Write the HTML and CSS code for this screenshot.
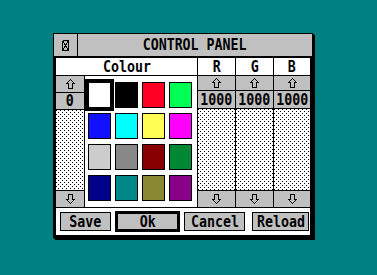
FILE: index.html
```html
<!DOCTYPE html>
<html>
<head>
<meta charset="utf-8">
<link rel="stylesheet" href="styles.css">
</head>
<body>
<div class="window">
  <div class="titlebar">
    <div class="closebox">
      <svg width="7" height="11" viewBox="0 0 7 11" shape-rendering="crispEdges">
        <path d="M0.5 0.5H6.5M0.5 10.5H6.5M0.5 0.5V10.5M6.5 0.5V10.5M1 1L6 10M6 1L1 10" stroke="#000" stroke-width="1" fill="none"/>
      </svg>
    </div>
    <div class="title"><span class="t">CONTROL PANEL</span></div>
  </div>
  <div class="form">
    <div class="cols">
      <div class="colour">
        <div class="head"><span class="t">Colour</span></div>
        <div class="colour-main">
          <div class="slider slider-left">
            <div class="btn arrow"><svg width="9" height="10" viewBox="0 0 9 10" shape-rendering="crispEdges"><path d="M4.5 0.5L8.5 4.5H6.5V9.5H2.5V4.5H0.5Z" stroke="#000" fill="none"/></svg></div>
            <div class="val"><span class="t">0</span></div>
            <div class="track"></div>
            <div class="btn arrow"><svg width="9" height="10" viewBox="0 0 9 10" shape-rendering="crispEdges"><path d="M4.5 9.5L8.5 5.5H6.5V0.5H2.5V5.5H0.5Z" stroke="#000" fill="none"/></svg></div>
          </div>
          <div class="grid">
            <div class="sw sel" style="background:#ffffff"></div>
            <div class="sw" style="background:#000000"></div>
            <div class="sw" style="background:#ff0022"></div>
            <div class="sw" style="background:#00ff55"></div>
            <div class="sw" style="background:#1111ff"></div>
            <div class="sw" style="background:#00ffff"></div>
            <div class="sw" style="background:#ffff55"></div>
            <div class="sw" style="background:#ff00ff"></div>
            <div class="sw" style="background:#cccccc"></div>
            <div class="sw" style="background:#888888"></div>
            <div class="sw" style="background:#880000"></div>
            <div class="sw" style="background:#008833"></div>
            <div class="sw" style="background:#000088"></div>
            <div class="sw" style="background:#008888"></div>
            <div class="sw" style="background:#888833"></div>
            <div class="sw" style="background:#880088"></div>
          </div>
        </div>
      </div>
      <div class="chan c37">
        <div class="head"><span class="t">R</span></div>
        <div class="slider">
          <div class="btn arrow up"><svg width="9" height="10" viewBox="0 0 9 10" shape-rendering="crispEdges"><path d="M4.5 0.5L8.5 4.5H6.5V9.5H2.5V4.5H0.5Z" stroke="#000" fill="none"/></svg></div>
          <div class="val v2"><span class="t">1000</span></div>
          <div class="track"></div>
          <div class="btn arrow"><svg width="9" height="10" viewBox="0 0 9 10" shape-rendering="crispEdges"><path d="M4.5 9.5L8.5 5.5H6.5V0.5H2.5V5.5H0.5Z" stroke="#000" fill="none"/></svg></div>
        </div>
      </div>
      <div class="chan c37">
        <div class="head"><span class="t">G</span></div>
        <div class="slider">
          <div class="btn arrow up"><svg width="9" height="10" viewBox="0 0 9 10" shape-rendering="crispEdges"><path d="M4.5 0.5L8.5 4.5H6.5V9.5H2.5V4.5H0.5Z" stroke="#000" fill="none"/></svg></div>
          <div class="val v2"><span class="t">1000</span></div>
          <div class="track"></div>
          <div class="btn arrow"><svg width="9" height="10" viewBox="0 0 9 10" shape-rendering="crispEdges"><path d="M4.5 9.5L8.5 5.5H6.5V0.5H2.5V5.5H0.5Z" stroke="#000" fill="none"/></svg></div>
        </div>
      </div>
      <div class="chan c36">
        <div class="head"><span class="t">B</span></div>
        <div class="slider">
          <div class="btn arrow up"><svg width="9" height="10" viewBox="0 0 9 10" shape-rendering="crispEdges"><path d="M4.5 0.5L8.5 4.5H6.5V9.5H2.5V4.5H0.5Z" stroke="#000" fill="none"/></svg></div>
          <div class="val v2"><span class="t">1000</span></div>
          <div class="track"></div>
          <div class="btn arrow"><svg width="9" height="10" viewBox="0 0 9 10" shape-rendering="crispEdges"><path d="M4.5 9.5L8.5 5.5H6.5V0.5H2.5V5.5H0.5Z" stroke="#000" fill="none"/></svg></div>
        </div>
      </div>
    </div>
    <div class="buttons">
      <div class="button b-save"><span class="t">Save</span></div>
      <div class="button b-ok"><span class="t">Ok</span></div>
      <div class="button b-cancel"><span class="t">Cancel</span></div>
      <div class="button b-reload"><span class="t">Reload</span></div>
    </div>
  </div>
</div>
</body>
</html>
```
FILE: styles.css
```css
html, body {
  margin: 0;
  padding: 0;
}
body {
  background: #008080;
  width: 377px;
  height: 275px;
  overflow: hidden;
  font-family: "DejaVu Sans Mono", "Liberation Mono", monospace;
  font-weight: bold;
  font-size: 16px;
  color: #000;
}
.t {
  display: inline-block;
  transform: scaleX(0.83);
  line-height: 16px;
  white-space: nowrap;
}
.window {
  margin: 33px 0 0 53px;
  width: 258px;
  border: 1px solid #000;
  box-shadow: 1px 1px 0 #000, 2px 2px 0 #000;
  background: #fff;
}
.titlebar {
  display: flex;
  height: 22px;
  background: #c0c0c0;
}
.closebox {
  width: 23px;
  border-right: 1px solid #000;
  display: flex;
  align-items: center;
  justify-content: center;
}
.title {
  flex: 1;
  display: flex;
  align-items: center;
  justify-content: center;
}
.form {
  border: 2px solid #000;
  background: #fff;
}
.cols {
  display: flex;
  gap: 1px;
  background: #000;
  border-bottom: 1px solid #000;
}
.colour {
  width: 141px;
  display: flex;
  flex-direction: column;
  gap: 1px;
}
.chan {
  display: flex;
  flex-direction: column;
  gap: 1px;
}
.c37 { width: 37px; }
.c36 { width: 36px; }
.head {
  height: 17px;
  background: #fff;
  display: flex;
  align-items: center;
  justify-content: center;
}
.colour-main {
  display: flex;
  gap: 1px;
  height: 131px;
}
.slider {
  display: flex;
  flex-direction: column;
  gap: 1px;
  height: 131px;
}
.slider-left {
  width: 28px;
}
.btn, .val {
  background: #c0c0c0;
  display: flex;
  align-items: center;
  justify-content: center;
  height: 16px;
  flex: none;
}
.btn.up { height: 14px; }
.val.v2 { height: 17px; }
.track {
  flex: 1;
  background-color: #fff;
  background-image:
    conic-gradient(from 0deg at 1px 1px, transparent 75%, #000 75%),
    conic-gradient(from 0deg at 1px 1px, transparent 75%, #000 75%);
  background-size: 4px 4px, 4px 4px;
  background-position: 0 0, 2px 2px;
}
.btn svg { display: block; }
.grid {
  flex: 1;
  background: #fff;
  display: grid;
  grid-template-columns: repeat(4, 23px);
  grid-template-rows: repeat(4, 26px);
  column-gap: 4px;
  row-gap: 5px;
  padding: 6px 0 0 3px;
}
.sw {
  border: 1px solid #000;
}
.sw.sel {
  outline: 3px solid #000;
}
.buttons {
  height: 27px;
  display: flex;
  align-items: center;
  padding-left: 4px;
}
.button {
  box-sizing: border-box;
  height: 19px;
  border: 1px solid #000;
  background: #c0c0c0;
  display: flex;
  align-items: center;
  justify-content: center;
}
.b-save { width: 51px; }
.b-ok { width: 65px; height: 21px; border-width: 3px; margin-left: 4px; }
.b-cancel { width: 61px; margin-left: 4px; }
.b-reload { width: 57px; margin-left: 7px; }
```
